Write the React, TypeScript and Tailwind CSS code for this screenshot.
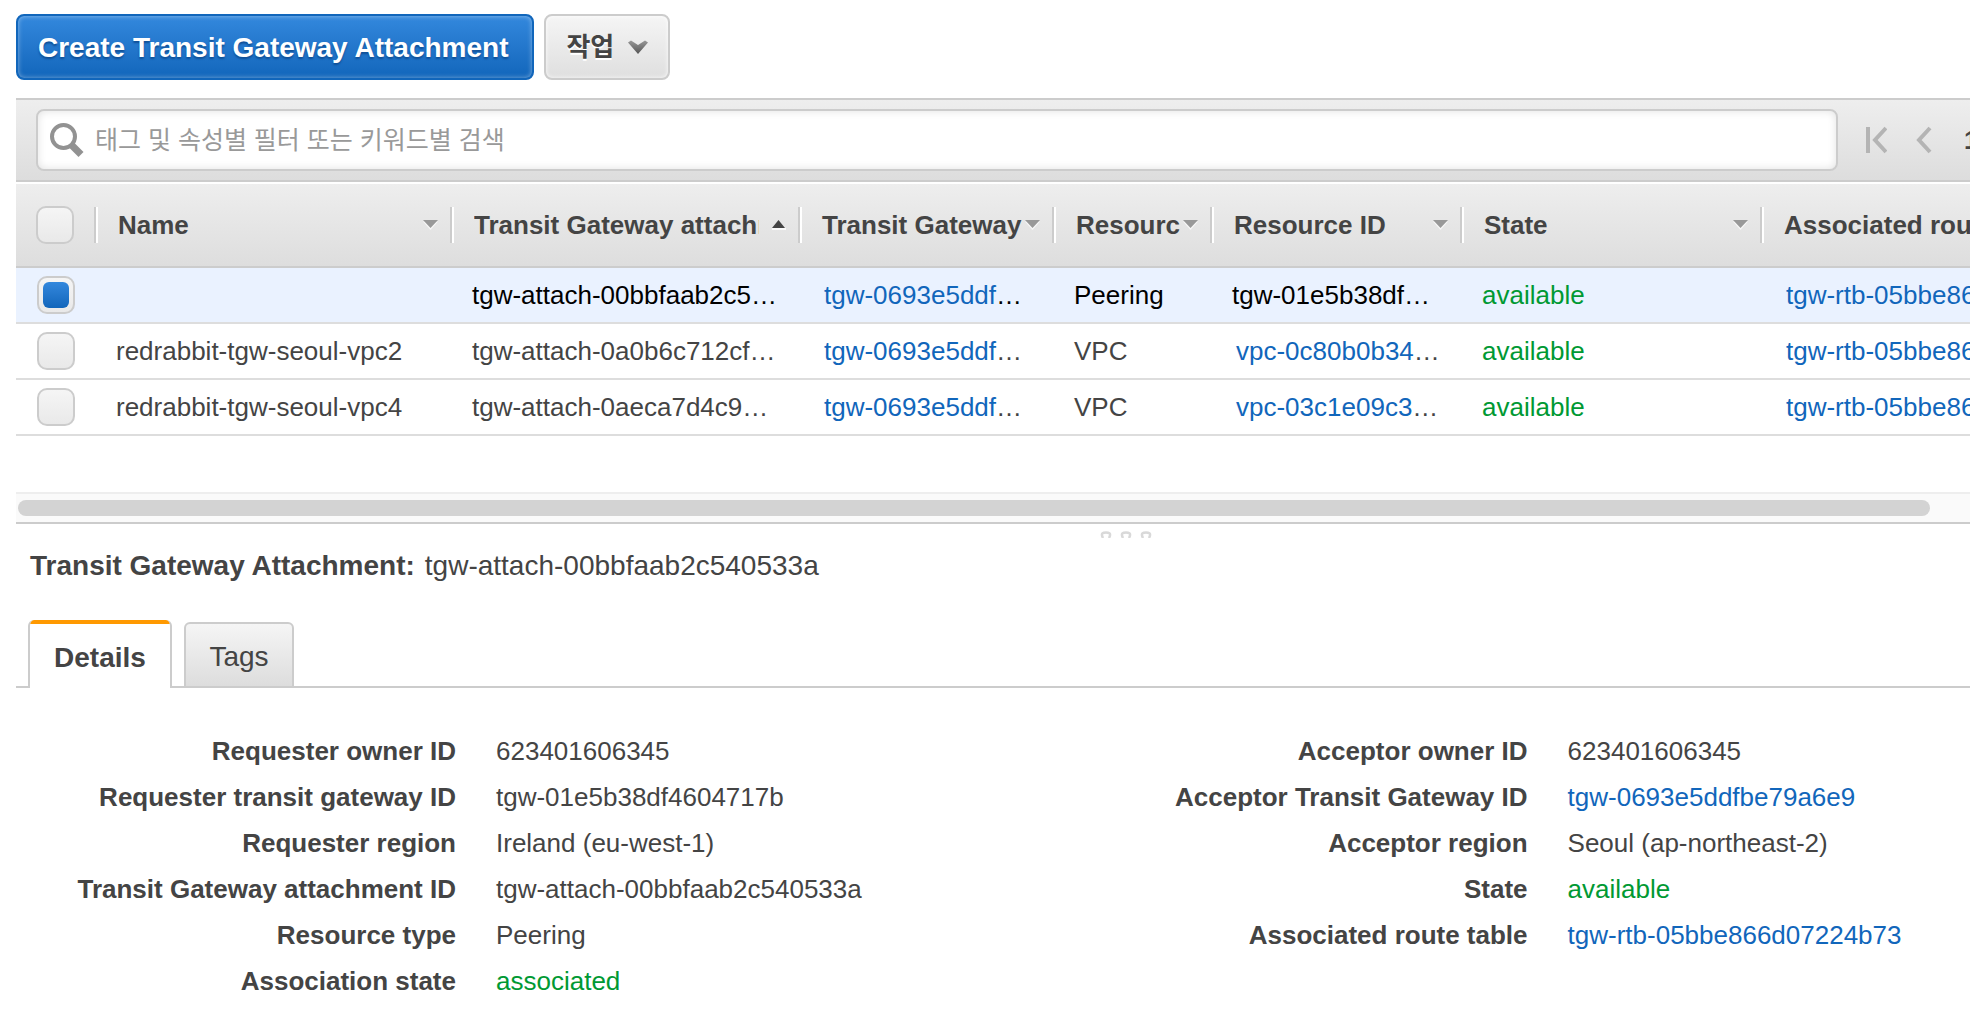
import React from "react";

const DownArrow = () => (
  <svg width="15" height="10" viewBox="0 0 15 10" className="shrink-0" aria-hidden="true">
    <path d="M0 1.5h15L7.500 10z" fill="#f8f8f8" />
    <path d="M0 0h15L7.500 8z" fill="#999" />
  </svg>
);

const UpArrow = () => (
  <svg width="15" height="10" viewBox="0 0 15 10" className="shrink-0" aria-hidden="true">
    <path d="M1 8h14v2H1z" fill="#fafafa" />
    <path d="M1 8h13L7.500 0z" fill="#444" />
  </svg>
);

const columns = [
  { label: "Name", sort: "none" },
  { label: "Transit Gateway attachm", sort: "up" },
  { label: "Transit Gateway", sort: "none" },
  { label: "Resourc", sort: "none" },
  { label: "Resource ID", sort: "none" },
  { label: "State", sort: "none" },
  { label: "Associated route table", sort: "none" },
];

const rows = [
  { name: "", attach: "tgw-attach-00bbfaab2c5", type: "Peering", resource: "tgw-01e5b38df", linked: false, selected: true },
  { name: "redrabbit-tgw-seoul-vpc2", attach: "tgw-attach-0a0b6c712cf", type: "VPC", resource: "vpc-0c80b0b34", linked: true, selected: false },
  { name: "redrabbit-tgw-seoul-vpc4", attach: "tgw-attach-0aeca7d4c9", type: "VPC", resource: "vpc-03c1e09c3", linked: true, selected: false },
];

type Detail = { label: string; value: string; kind?: "link" | "ok" };

const requester: Detail[] = [
  { label: "Requester owner ID", value: "623401606345" },
  { label: "Requester transit gateway ID", value: "tgw-01e5b38df4604717b" },
  { label: "Requester region", value: "Ireland (eu-west-1)" },
  { label: "Transit Gateway attachment ID", value: "tgw-attach-00bbfaab2c540533a" },
  { label: "Resource type", value: "Peering" },
  { label: "Association state", value: "associated", kind: "ok" },
];

const acceptor: Detail[] = [
  { label: "Acceptor owner ID", value: "623401606345" },
  { label: "Acceptor Transit Gateway ID", value: "tgw-0693e5ddfbe79a6e9", kind: "link" },
  { label: "Acceptor region", value: "Seoul (ap-northeast-2)" },
  { label: "State", value: "available", kind: "ok" },
  { label: "Associated route table", value: "tgw-rtb-05bbe866d07224b73", kind: "link" },
];

function Check({ label, checked = false }: { label: string; checked?: boolean }) {
  return (
    <span className="grid h-[38px] w-[38px] place-items-center">
      <input
        type="checkbox"
        aria-label={label}
        defaultChecked={checked}
        className="peer col-start-1 row-start-1 h-[38px] w-[38px] appearance-none rounded-[10px] border-2 border-[#ccc] bg-linear-to-b from-[#f5f5f5] to-[#e9e9e9]"
      />
      <span className="pointer-events-none col-start-1 row-start-1 hidden h-[26px] w-[26px] rounded-md bg-linear-to-b from-[#3388dd] to-[#1166bb] peer-checked:block" />
    </span>
  );
}

function Link({ children }: { children: React.ReactNode }) {
  return (
    <a href="#" className="text-[#1166bb]">
      {children}
    </a>
  );
}

function DetailList({ items }: { items: Detail[] }) {
  return (
    <dl className="grid auto-rows-[46px] grid-cols-[440px_1fr] gap-x-10 text-[26px] leading-[46px] whitespace-nowrap">
      {items.map((d) => (
        <React.Fragment key={d.label}>
          <dt className="text-right font-bold">{d.label}</dt>
          <dd className={d.kind === "ok" ? "text-[#009933]" : ""}>
            {d.kind === "link" ? <Link>{d.value}</Link> : d.value}
          </dd>
        </React.Fragment>
      ))}
    </dl>
  );
}

export default function App() {
  return (
    <main className="min-h-screen overflow-hidden bg-white pt-3.5 pl-4 font-['Liberation_Sans','Noto_Sans_CJK_KR',sans-serif] text-[26px] text-[#444]">
      <div className="flex gap-2.5">
        <button className="h-[66px] rounded-lg border-2 border-[#1166bb] bg-linear-to-b from-[#3388dd] to-[#1166bb] pt-0.5 pr-6 pl-5 text-[28px] font-bold whitespace-nowrap text-white shadow-[inset_0_0_5px_rgba(255,255,255,0.45)] [text-shadow:0_2px_2px_#0f4f96]">
          Create Transit Gateway Attachment
        </button>
        <button className="flex h-[66px] items-center gap-3.5 rounded-lg border-2 border-[#ccc] bg-linear-to-b from-[#f5f5f5] to-[#dfdfdf] px-5 text-[26px] font-bold shadow-[inset_0_0_4px_rgba(255,255,255,0.9)] [text-shadow:0_2px_0_#fff]">
          작업
          <svg width="20" height="14" viewBox="0 0 20 14" aria-hidden="true">
            <defs>
              <linearGradient id="chevron" x1="0" y1="0" x2="0" y2="1">
                <stop offset="0" stopColor="#999" />
                <stop offset="1" stopColor="#555" />
              </linearGradient>
            </defs>
            <path d="M0 2.500L3 0.500L10 5L17 0.500L20 2.500L10 14z" fill="url(#chevron)" />
          </svg>
        </button>
      </div>

      <div className="mt-[18px] flex h-[84px] items-center border-y-2 border-[#ccc] bg-linear-to-b from-[#eee] to-[#ddd] pl-5">
        <label className="flex h-[62px] flex-1 items-center gap-2.5 rounded-lg border-2 border-[#ccc] bg-white pl-3 shadow-[inset_0_0_8px_rgba(0,0,0,0.12)]">
          <svg width="35" height="36" viewBox="0 0 35 36" fill="none" stroke="#929292" aria-hidden="true">
            <circle cx="13.500" cy="14.500" r="11.500" strokeWidth="4" />
            <path d="M22 23.500L31 32.500" strokeWidth="7" />
          </svg>
          <input
            aria-label="필터"
            placeholder="태그 및 속성별 필터 또는 키워드별 검색"
            className="h-full min-w-0 flex-1 bg-transparent text-[25px] outline-none placeholder:text-[#999]"
          />
        </label>
        <nav className="flex w-[132px] items-center overflow-hidden pl-7">
          <button aria-label="First page">
            <svg width="21" height="28" viewBox="0 0 21 28" fill="none" stroke="#b4b4b4" strokeWidth="4" aria-hidden="true">
              <path d="M2 1v26M20 2L9 14l11 12" />
            </svg>
          </button>
          <button aria-label="Previous page" className="ml-7">
            <svg width="17" height="28" viewBox="0 0 17 28" fill="none" stroke="#b4b4b4" strokeWidth="4" aria-hidden="true">
              <path d="M15 2L4 14l11 12" />
            </svg>
          </button>
          <span className="ml-8 font-bold">1</span>
        </nav>
      </div>

      <section className="mt-0.5 h-[308px] overflow-hidden">
        <table className="w-full table-fixed border-separate border-spacing-0 whitespace-nowrap">
          <colgroup>
            <col className="w-[78px]" />
            <col className="w-[356px]" />
            <col className="w-[348px]" />
            <col className="w-[254px]" />
            <col className="w-[158px]" />
            <col className="w-[250px]" />
            <col className="w-[300px]" />
            <col className="w-[360px]" />
          </colgroup>
          <thead>
            <tr className="h-[84px] bg-linear-to-b from-[#eee] to-[#ddd]">
              <th className="border-b-2 border-[#ccc] pl-5">
                <Check label="Select all" />
              </th>
              {columns.map((c) => (
                <th key={c.label} className="border-b-2 border-[#ccc] text-left">
                  <div className="flex h-9 items-center border-l-2 border-[#ccc] pr-3">
                    <span className="h-9 w-0.5 shrink-0 bg-white" />
                    <span className={c.sort === "up" ? "mr-3 ml-5 flex-1 overflow-hidden" : "mr-0.5 ml-5 flex-1"}>
                      {c.label}
                    </span>
                    {c.sort === "up" ? <UpArrow /> : <DownArrow />}
                  </div>
                </th>
              ))}
            </tr>
          </thead>
          <tbody>
            {rows.map((r) => (
              <tr
                key={r.attach}
                className={
                  r.selected
                    ? "h-14 bg-[#eaf2ff] text-black *:border-b-2 *:border-[#ddd]"
                    : "h-14 *:border-b-2 *:border-[#ddd]"
                }
              >
                <td className="pl-[21px]">
                  <Check label={"Select " + r.attach} checked={r.selected} />
                </td>
                <td className="pl-[22px]">{r.name}</td>
                <td className="pl-[22px]">{r.attach}…</td>
                <td className="pl-[26px]">
                  <Link>tgw-0693e5ddf</Link>…
                </td>
                <td className="pl-[22px]">{r.type}</td>
                <td className={r.linked ? "pl-[26px]" : "pl-[22px]"}>
                  {r.linked ? <Link>{r.resource}</Link> : r.resource}…
                </td>
                <td className="pl-[22px] text-[#009933]">available</td>
                <td className="pl-[26px]">
                  <Link>tgw-rtb-05bbe866d07224b73</Link>
                </td>
              </tr>
            ))}
          </tbody>
        </table>
      </section>

      <div className="h-8 border-t-2 border-b-2 border-t-[#eee] border-b-[#ccc] bg-[#fafafa] pt-1.5 pr-10 pl-0.5">
        <div className="h-4 rounded-full bg-[#d3d3d3]" />
      </div>

      <div className="flex h-3.5 items-end justify-center pl-[266px]">
        <svg width="52" height="7" viewBox="0 0 52 7" fill="none" aria-hidden="true">
          <g stroke="#d9d9d9" strokeWidth="2.500">
            <path d="M3 7C0 1.500 4 1.500 6 1.500S12 1.500 9 7" />
            <path d="M23 7C20 1.500 24 1.500 26 1.500S32 1.500 29 7" />
            <path d="M43 7C40 1.500 44 1.500 46 1.500S52 1.500 49 7" />
          </g>
        </svg>
      </div>

      <h2 className="mt-3 ml-3.5 flex h-8 items-center gap-2.5 text-[28px] whitespace-nowrap">
        <span className="font-bold">Transit Gateway Attachment:</span>
        <span>tgw-attach-00bbfaab2c540533a</span>
      </h2>

      <div role="tablist" className="mt-[38px] flex h-[68px] items-end text-[28px]">
        <span className="h-0.5 w-3 bg-[#ccc]" />
        <button role="tab" aria-selected="true" className="h-[68px] w-36 overflow-hidden rounded-t-md border-x-2 border-x-[#ccc] font-bold">
          <span className="flex h-full items-center justify-center border-t-4 border-[#ff9900] pt-1">Details</span>
        </button>
        <span className="h-0.5 w-3 bg-[#ccc]" />
        <button role="tab" aria-selected="false" className="h-[66px] w-[110px] rounded-t-md border-2 border-[#ccc] bg-linear-to-b from-[#f5f5f5] to-[#ddd] pt-1">
          Tags
        </button>
        <span className="h-0.5 flex-1 bg-[#ccc]" />
      </div>

      <section className="mt-10 grid grid-cols-[17fr_14fr]">
        <DetailList items={requester} />
        <DetailList items={acceptor} />
      </section>
    </main>
  );
}
